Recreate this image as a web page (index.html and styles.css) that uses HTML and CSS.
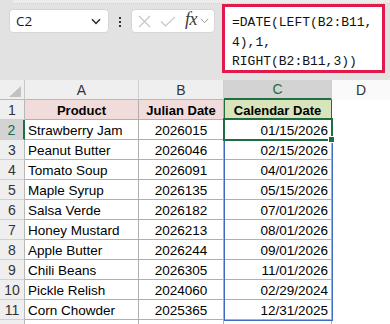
FILE: index.html
```html
<!DOCTYPE html>
<html lang="en">
<head>
  <meta charset="UTF-8">
  <meta name="viewport" content="width=device-width, initial-scale=1.0">
  <title>Julian Date to Calendar Date</title>
  <link rel="stylesheet" href="styles.css">
</head>
<body>
  <!-- Barra de fórmulas -->
  <header class="toolbar">
    <div class="strip"></div>
    <div class="namebox">
      <span>C2</span>
      <svg width="10" height="7" viewBox="0 0 10 7"><path d="M1 1.2 L5 5.4 L9 1.2" fill="none" stroke="#2a2a2a" stroke-width="1.5"/></svg>
    </div>
    <div class="grip"><i></i><i></i><i></i></div>
    <div class="fxbox">
      <svg width="13" height="13" viewBox="0 0 13 13"><path d="M1 1 L12 12 M12 1 L1 12" stroke="#c4c4c4" stroke-width="1.1"/></svg>
      <svg width="16" height="11" viewBox="0 0 16 11"><path d="M1 5.5 L5.5 10 L15 0.8" fill="none" stroke="#c4c4c4" stroke-width="1.1"/></svg>
      <span class="fx">fx</span>
      <svg width="9" height="6" viewBox="0 0 9 6"><path d="M0.8 0.8 L4.5 4.7 L8.2 0.8" fill="none" stroke="#9a9a9a" stroke-width="1"/></svg>
    </div>
    <div class="formula">=DATE(LEFT(B2:B11,<br>4),1,<br>RIGHT(B2:B11,3))</div>
  </header>

  <!-- Planilha -->
  <main class="sheet">
    <div class="corner">
      <svg width="12" height="11" viewBox="0 0 12 11"><path d="M12 0 L12 11 L0 11 Z" fill="#c2c2c2"/></svg>
    </div>
    <div class="hd">A</div>
    <div class="hd">B</div>
    <div class="hd active">C</div>
    <div class="hd last">D</div>

    <div class="rh">1</div>
    <div class="c th">Product</div>
    <div class="c th">Julian Date</div>
    <div class="c th cal">Calendar Date</div>
    <div class="e"></div>

    <div class="rh active">2</div>
    <div class="c">Strawberry Jam</div>
    <div class="c num">2026015</div>
    <div class="c date">01/15/2026</div>
    <div class="e"></div>

    <div class="rh">3</div>
    <div class="c">Peanut Butter</div>
    <div class="c num">2026046</div>
    <div class="c date">02/15/2026</div>
    <div class="e"></div>

    <div class="rh">4</div>
    <div class="c">Tomato Soup</div>
    <div class="c num">2026091</div>
    <div class="c date">04/01/2026</div>
    <div class="e"></div>

    <div class="rh">5</div>
    <div class="c">Maple Syrup</div>
    <div class="c num">2026135</div>
    <div class="c date">05/15/2026</div>
    <div class="e"></div>

    <div class="rh">6</div>
    <div class="c">Salsa Verde</div>
    <div class="c num">2026182</div>
    <div class="c date">07/01/2026</div>
    <div class="e"></div>

    <div class="rh">7</div>
    <div class="c">Honey Mustard</div>
    <div class="c num">2026213</div>
    <div class="c date">08/01/2026</div>
    <div class="e"></div>

    <div class="rh">8</div>
    <div class="c">Apple Butter</div>
    <div class="c num">2026244</div>
    <div class="c date">09/01/2026</div>
    <div class="e"></div>

    <div class="rh">9</div>
    <div class="c">Chili Beans</div>
    <div class="c num">2026305</div>
    <div class="c date">11/01/2026</div>
    <div class="e"></div>

    <div class="rh">10</div>
    <div class="c">Pickle Relish</div>
    <div class="c num">2024060</div>
    <div class="c date">02/29/2024</div>
    <div class="e"></div>

    <div class="rh">11</div>
    <div class="c">Corn Chowder</div>
    <div class="c num">2025365</div>
    <div class="c date">12/31/2025</div>
    <div class="e"></div>

    <div class="rh"></div>
    <div class="c"></div>
    <div class="c"></div>
    <div class="c"></div>
    <div class="e"></div>

    <!-- Seleção -->
    <div class="spill"></div>
    <div class="selected"><span class="handle"></span></div>
  </main>
</body>
</html>
```

FILE: styles.css
```css
/* Estilos Globais */
* {
  margin: 0;
  padding: 0;
  box-sizing: border-box;
}
html, body {
  height: 100%;
  overflow: hidden;
}
body {
  font-family: 'Liberation Sans', Arial, sans-serif;
  background-color: #ffffff;
  color: #000;
}

/* Barra de fórmulas */
.toolbar {
  position: relative;
  display: flex;
  align-items: flex-start;
  height: 80px;
  padding-left: 9px;
  background-color: #e2e2e2;
}
.strip {
  position: absolute;
  left: 13px;
  right: 0;
  top: 0;
  height: 4px;
  background-color: #ececec;
  border-bottom: 1px dotted #d0d0d0;
}
.namebox {
  display: flex;
  align-items: center;
  justify-content: space-between;
  width: 100px;
  height: 24px;
  margin-top: 9px;
  padding: 0 7px 0 6px;
  background-color: #ffffff;
  border: 1px solid #d6d6d6;
  border-radius: 4px;
  font-family: 'Open Sans', sans-serif;
  font-size: 13.5px;
  color: #1a1a1a;
}
.grip {
  display: flex;
  flex-direction: column;
  gap: 2px;
  width: 2px;
  margin: 17px 10px 0;
}
.grip i {
  display: block;
  width: 2px;
  height: 2px;
  background-color: #333;
}
.fxbox {
  display: flex;
  align-items: center;
  width: 84px;
  height: 24px;
  margin-top: 9px;
  padding-left: 6px;
  gap: 9px;
  background-color: #ffffff;
  border: 1px solid #d6d6d6;
  border-radius: 4px;
}
.fx {
  font-family: 'Liberation Serif', serif;
  font-style: italic;
  font-size: 18px;
  color: #3a3a3a;
  margin-top: -3px;
  letter-spacing: -0.5px;
}
.fxbox svg:last-child {
  margin-left: -6px;
}
.formula {
  width: 163px;
  height: 69px;
  margin: 4px 0 0 7px;
  padding: 6px 0 0 7px;
  background-color: #ffffff;
  border: 3px solid #e11a4c;
  font-family: 'Liberation Mono', monospace;
  font-size: 13px;
  line-height: 19.5px;
  color: #111;
}

/* Planilha */
.sheet {
  position: relative;
  display: grid;
  grid-template-columns: 25px 114px 85px 108px 58px;
  grid-auto-rows: 20px;
  font-size: 13.5px;
}
.corner {
  display: flex;
  align-items: flex-end;
  justify-content: flex-end;
  padding: 0 3px 2px 0;
  background-color: #efefef;
  border-right: 1px solid #c8c8c8;
  border-bottom: 1px solid #b8b8b8;
}
.hd {
  display: flex;
  align-items: center;
  justify-content: center;
  background-color: #efefef;
  border-right: 1px solid #d0d0d0;
  border-bottom: 1px solid #b8b8b8;
  color: #333;
  font-size: 14px;
}
.hd.active {
  background-color: #d3d3d3;
  color: #1e6e42;
  border-bottom: 2px solid #1e6e42;
}
.hd.last {
  background-color: #fafafa;
  border-right: none;
  border-bottom: none;
}
.rh {
  display: flex;
  align-items: center;
  justify-content: center;
  padding-top: 1px;
  background-color: #efefef;
  border-right: 1px solid #b8b8b8;
  border-bottom: 1px solid #d0d0d0;
  color: #333;
  font-size: 14px;
}
.rh.active {
  background-color: #d3d3d3;
  color: #1e6e42;
  border-right: 2px solid #1e6e42;
}
.c {
  display: flex;
  align-items: center;
  padding: 2px 3px 0;
  border-right: 1px solid #b0b0b0;
  border-bottom: 1px solid #b0b0b0;
  white-space: nowrap;
}
.c.th {
  justify-content: center;
  font-weight: bold;
  font-size: 13px;
  background-color: #f2dcdb;
}
.c.cal {
  background-color: #d8e4bc;
  border-right-color: #1e6e42;
  box-shadow: inset 1px 0 0 #1e6e42;
}
.c.num {
  justify-content: center;
}
.c.date {
  justify-content: flex-end;
}
.e {
  background-color: #ffffff;
}

/* Seleção */
.spill {
  position: absolute;
  left: 224px;
  top: 39px;
  width: 109px;
  height: 202px;
  border: 1.5px solid #3d6cc0;
}
.selected {
  position: absolute;
  left: 223px;
  top: 38px;
  width: 110px;
  height: 23px;
  border: 2px solid #1e6e42;
}
.handle {
  position: absolute;
  right: -4px;
  bottom: -4px;
  width: 7px;
  height: 7px;
  background-color: #1e6e42;
  border: 1px solid #ffffff;
}
```
